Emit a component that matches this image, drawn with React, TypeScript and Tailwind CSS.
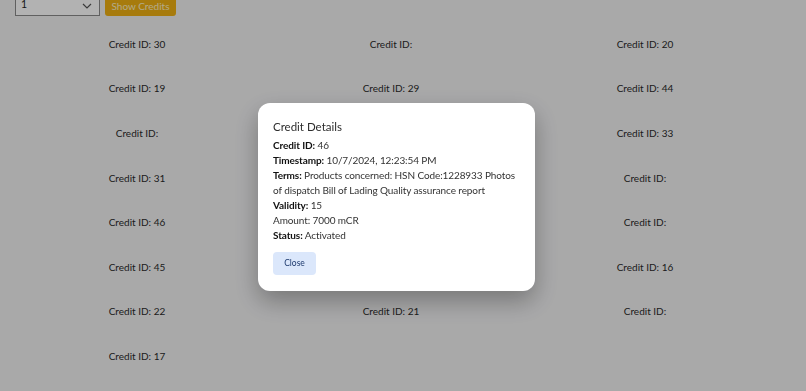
import React from "react";

const credits: string[] = [
    "30", "", "20",
    "19", "29", "44",
    "", "", "33",
    "31", "", "",
    "46", "", "",
    "45", "", "16",
    "22", "21", "",
    "17",
];

const CreditModal: React.FC<{ onClose: () => void }> = ({ onClose }) => {
    return (
        <div className="fixed inset-0 z-10 flex items-center justify-center bg-black/30 pr-[13px] pt-[2px]">
            <div className="w-[277px] rounded-[12px] bg-white px-[15px] pt-[15px] pb-[16px] shadow-[0_10px_25px_rgba(0,0,0,0.3)]">
                <h2 className="text-[11.5px] leading-[18px] text-[#2d2d2d] mb-[2px]">
                    Credit Details
                </h2>
                <div className="text-[10px] leading-[15px] tracking-[-0.1px] text-[#333]">
                    <p>
                        <span className="font-bold text-[#111]">Credit ID:</span> 46
                    </p>
                    <p>
                        <span className="font-bold text-[#111]">Timestamp:</span> 10/7/2024, 12:23:54 PM
                    </p>
                    <p>
                        <span className="font-bold text-[#111]">Terms:</span> Products concerned: HSN
                        Code:1228933 Photos of dispatch Bill of Lading Quality assurance report
                    </p>
                    <p>
                        <span className="font-bold text-[#111]">Validity:</span> 15
                    </p>
                    <p>Amount: 7000 mCR</p>
                    <p>
                        <span className="font-bold text-[#111]">Status:</span> Activated
                    </p>
                </div>
                <button
                    onClick={onClose}
                    className="mt-[9px] h-[23px] w-[43px] rounded-[4px] bg-[#dbe7fb] text-[8.5px] text-[#1e3a6e]"
                >
                    Close
                </button>
            </div>
        </div>
    );
};

export default function App() {
    const [open, setOpen] = React.useState(true);

    return (
        <div
            className="h-screen overflow-hidden bg-[#f2f2f3] text-[10px] leading-[15px]"
            style={{ fontFamily: '"Segoe UI", Lato, "Noto Sans", sans-serif' }}
        >
            <div className="-mt-[10px] flex items-center gap-[5px] pl-[15px]">
                <div className="relative flex h-[26px] w-[85px] items-center border border-[#8a8a8a] bg-white pl-[5px] pt-[2px] text-[10.5px] text-[#222]">
                    1
                    <svg
                        className="absolute right-[7px] top-[11px] h-[8px] w-[10px]"
                        viewBox="0 0 10 8"
                        fill="none"
                        stroke="#555"
                        strokeWidth="1.2"
                    >
                        <path d="M1 2l4 4 4-4" />
                    </svg>
                </div>
                <button
                    onClick={() => setOpen(true)}
                    className="h-[26px] w-[71px] rounded-[3px] bg-[#f0b114] pt-[6px] text-[#fff3c4]"
                >
                    Show Credits
                </button>
            </div>
            <div className="ml-[10px] mt-[6px] grid w-[762px] grid-cols-3 auto-rows-[44.6px]">
                {credits.map((id, i) => (
                    <div
                        key={i}
                        className="flex items-center justify-center text-[#2a2a2a]"
                    >
                        Credit ID: {id}
                    </div>
                ))}
            </div>
            {open && <CreditModal onClose={() => setOpen(false)} />}
        </div>
    );
}
